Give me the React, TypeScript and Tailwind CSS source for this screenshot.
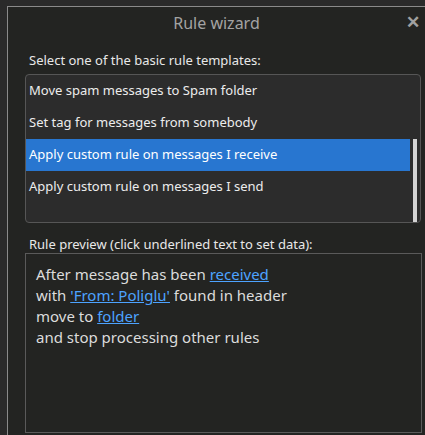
import React from "react";

const font = { fontFamily: '"Noto Sans", "Open Sans", sans-serif' };

export default function App() {
  const items = [
    "Move spam messages to Spam folder",
    "Set tag for messages from somebody",
    "Apply custom rule on messages I receive",
    "Apply custom rule on messages I send",
  ];
  return (
    <div className="w-[425px] h-[435px] bg-[#2a2a2a] overflow-hidden pl-[7px] pt-[6px]" style={font}>
      <div className="h-[440px] w-[430px] bg-[#232422] border-l border-t border-[#8a8a8a] flex flex-col">
        <div className="h-[32px] flex items-center relative">
          <div className="w-[430px] text-center text-[16px] text-[#a3a3a3] pr-[12px]">Rule wizard</div>
          <div className="absolute left-[398px] top-[6px] text-[#a0a0a0] text-[17px] font-bold leading-none">✕</div>
        </div>
        <div className="pl-[21px] pt-[12px] text-[13px] text-[#e8e8e8] leading-[18px]">
          Select one of the basic rule templates:
        </div>
        <div className="ml-[17px] mt-[5px] w-[396px] h-[149px] rounded-[4px] border border-[#565656] bg-[#2c2c2c] flex">
          <div className="flex-1 flex flex-col">
            {items.map((t, i) => (
              <div
                key={t}
                className={
                  i === 2
                    ? "h-[32px] flex items-center pl-[3px] text-[13px] text-white bg-[#2876d0]"
                    : "h-[32px] flex items-center pl-[3px] text-[13px] text-[#ececec]"
                }
              >
                {t}
              </div>
            ))}
          </div>
          <div className="w-[10px] flex flex-col">
            <div className="h-[64px]" />
            <div className="ml-[3px] w-[4px] flex-1 bg-[#d4d4d4]" />
          </div>
        </div>
        <div className="pl-[21px] pt-[12px] text-[13px] text-[#e8e8e8] leading-[18px]">
          Rule preview (click underlined text to set data):
        </div>
        <div className="ml-[17px] w-[397px] h-[180px] border border-[#5a5a5a] bg-[#232422] pl-[10px] pt-[10px] text-[15px] leading-[21px] text-[#dcdcdc]">
          <div>
            After message has been <span className="text-[#4da3ff] underline">received</span>
          </div>
          <div>
            with <span className="text-[#4da3ff] underline">'From: Poliglu'</span> found in header
          </div>
          <div>
            move to <span className="text-[#4da3ff] underline">folder</span>
          </div>
          <div>and stop processing other rules</div>
        </div>
      </div>
    </div>
  );
}
